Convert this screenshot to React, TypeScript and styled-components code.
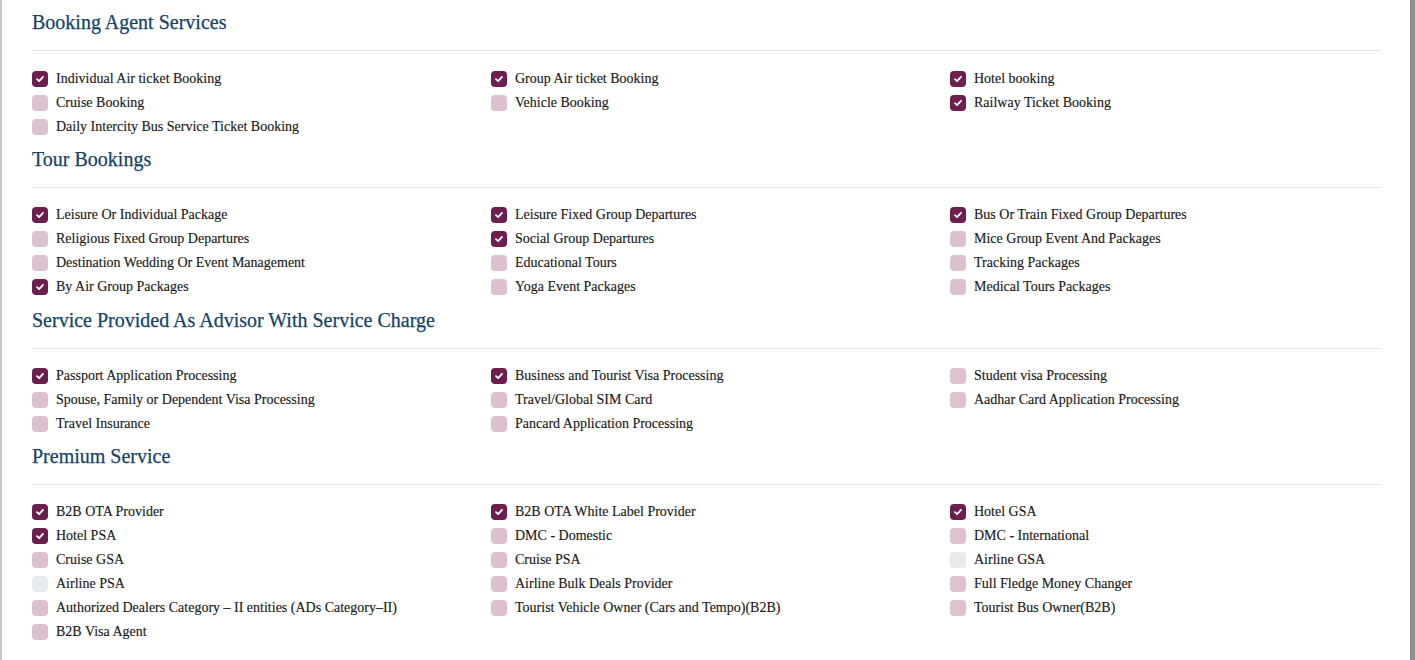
import React from 'react';
import styled, { createGlobalStyle } from 'styled-components';

const GlobalStyle = createGlobalStyle`
  html, body {
    margin: 0;
    padding: 0;
    background: #fff;
  }
  body {
    font-family: 'Liberation Serif', 'Times New Roman', serif;
    color: #1a1a1a;
  }
`;

const Page = styled.div`
  box-sizing: border-box;
  width: 1415px;
  min-height: 660px;
  border-left: 2px solid #c9c9c9;
  border-right: 5px solid #8f8f8f;
  padding: 10px 30px 20px 30px;
`;

const Section = styled.section`
  display: flex;
  flex-direction: column;
  & + & {
    margin-top: 9px;
  }
  &:first-child hr {
    margin-bottom: 16px;
  }
  &:nth-child(2),
  &:last-child {
    margin-top: 8px;
  }
`;

const SectionTitle = styled.h2`
  margin: 0;
  font-size: 20px;
  line-height: 24px;
  font-weight: 400;
  color: #134468;
  -webkit-text-stroke: 0.25px #134468;
`;

const Divider = styled.hr`
  margin: 16px 0 15px 0;
  border: 0;
  border-top: 1px solid #e3e3e3;
  height: 0;
`;

const OptionGrid = styled.div`
  display: grid;
  grid-template-columns: 459px 459px 1fr;
  grid-auto-rows: 24px;
`;

const Option = styled.label`
  display: flex;
  align-items: center;
  gap: 8px;
  font-size: 14px;
  color: #1a1a1a;
  -webkit-text-stroke: 0.15px #1a1a1a;
  cursor: pointer;
`;

type BoxState = 'on' | 'off' | 'disabled';

const Box = styled.span<{ $state: BoxState }>`
  display: inline-flex;
  align-items: center;
  justify-content: center;
  width: 16px;
  height: 16px;
  border-radius: 4px;
  flex-shrink: 0;
  background-color: ${({ $state }) =>
    $state === 'on' ? '#6c1f4e' : $state === 'off' ? '#dcc1d1' : '#e8ebee'};
`;

interface Item {
  label: string;
  state: BoxState;
}

interface Group {
  title: string;
  items: Item[];
}

const on = (label: string): Item => ({ label, state: 'on' });
const off = (label: string): Item => ({ label, state: 'off' });
const dis = (label: string): Item => ({ label, state: 'disabled' });

const groups: Group[] = [
  {
    title: 'Booking Agent Services',
    items: [
      on('Individual Air ticket Booking'),
      on('Group Air ticket Booking'),
      on('Hotel booking'),
      off('Cruise Booking'),
      off('Vehicle Booking'),
      on('Railway Ticket Booking'),
      off('Daily Intercity Bus Service Ticket Booking'),
    ],
  },
  {
    title: 'Tour Bookings',
    items: [
      on('Leisure Or Individual Package'),
      on('Leisure Fixed Group Departures'),
      on('Bus Or Train Fixed Group Departures'),
      off('Religious Fixed Group Departures'),
      on('Social Group Departures'),
      off('Mice Group Event And Packages'),
      off('Destination Wedding Or Event Management'),
      off('Educational Tours'),
      off('Tracking Packages'),
      on('By Air Group Packages'),
      off('Yoga Event Packages'),
      off('Medical Tours Packages'),
    ],
  },
  {
    title: 'Service Provided As Advisor With Service Charge',
    items: [
      on('Passport Application Processing'),
      on('Business and Tourist Visa Processing'),
      off('Student visa Processing'),
      off('Spouse, Family or Dependent Visa Processing'),
      off('Travel/Global SIM Card'),
      off('Aadhar Card Application Processing'),
      off('Travel Insurance'),
      off('Pancard Application Processing'),
    ],
  },
  {
    title: 'Premium Service',
    items: [
      on('B2B OTA Provider'),
      on('B2B OTA White Label Provider'),
      on('Hotel GSA'),
      on('Hotel PSA'),
      off('DMC - Domestic'),
      off('DMC - International'),
      off('Cruise GSA'),
      off('Cruise PSA'),
      dis('Airline GSA'),
      dis('Airline PSA'),
      off('Airline Bulk Deals Provider'),
      off('Full Fledge Money Changer'),
      off('Authorized Dealers Category – II entities (ADs Category–II)'),
      off('Tourist Vehicle Owner (Cars and Tempo)(B2B)'),
      off('Tourist Bus Owner(B2B)'),
      off('B2B Visa Agent'),
    ],
  },
];

function Check() {
  return (
    <svg width="10" height="10" viewBox="0 0 10 10" aria-hidden>
      <path
        d="M2 5.2 L4.1 7.2 L8 2.9"
        fill="none"
        stroke="#fff"
        strokeWidth="1.8"
        strokeLinecap="round"
        strokeLinejoin="round"
      />
    </svg>
  );
}

function ServiceGroup({ title, items }: Group) {
  return (
    <Section>
      <SectionTitle>{title}</SectionTitle>
      <Divider />
      <OptionGrid>
        {items.map((item, index) => (
          <Option key={index}>
            <Box $state={item.state}>{item.state === 'on' && <Check />}</Box>
            {item.label}
          </Option>
        ))}
      </OptionGrid>
    </Section>
  );
}

export default function App() {
  return (
    <>
      <GlobalStyle />
      <Page>
        {groups.map((group) => (
          <ServiceGroup key={group.title} {...group} />
        ))}
      </Page>
    </>
  );
}
